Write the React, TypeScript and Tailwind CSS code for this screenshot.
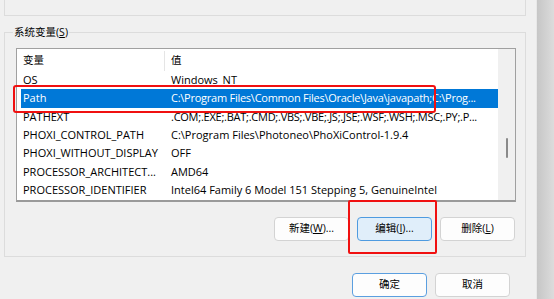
// 系统变量 dialog, cropped: env-var list with Path selected and edit button marked
const rows: [string, string, boolean][] = [
  ["OS", "Windows_NT", false],
  ["Path", "C:\\Program Files\\Common Files\\Oracle\\Java\\javapath;C:\\Prog...", true],
  ["PATHEXT", ".COM;.EXE;.BAT;.CMD;.VBS;.VBE;.JS;.JSE;.WSF;.WSH;.MSC;.PY;.P...", true],
  ["PHOXI_CONTROL_PATH", "C:\\Program Files\\Photoneo\\PhoXiControl-1.9.4", false],
  ["PHOXI_WITHOUT_DISPLAY", "OFF", false],
  ["PROCESSOR_ARCHITECT...", "AMD64", false],
  ["PROCESSOR_IDENTIFIER", "Intel64 Family 6 Model 151 Stepping 5, GenuineIntel", false],
];

function Btn({ label, keyChar, tail = "", variant = "normal" }: {
  label: string;
  keyChar: string;
  tail?: string;
  variant?: "normal" | "focus" | "default";
}) {
  const look =
    variant === "focus"
      ? "bg-[#e0eefa] border-[#4f9be0]"
      : variant === "default"
        ? "bg-[#fdfdfd] border-[#5b9fe0] border-[1.5px]"
        : "bg-[#fdfdfd] border-[#d3d3d3]";
  return (
    <div className={`w-[75px] h-[24px] flex items-center justify-center rounded-[4px] border text-[10.5px] text-black ${look}`}>
      {label}
      {keyChar && (
        <>
          (<span className="underline underline-offset-1">{keyChar}</span>){tail}
        </>
      )}
    </div>
  );
}

export default function App() {
  return (
    <div
      className="relative w-[554px] h-[299px] flex bg-[#f0f0f0] overflow-hidden"
      style={{ fontFamily: '"Open Sans", "Noto Sans CJK SC", sans-serif' }}
    >
      {/* dialog body */}
      <div className="w-[536px] flex flex-col">
        {/* bottom of the user-variables group */}
        <div className="ml-[4px] w-[522px] h-[16px] border-x border-b border-[#dcdcdc]" />

        {/* 系统变量 group */}
        <div className="relative ml-[4px] mt-[16px] w-[522px] h-[225px] border border-[#dcdcdc] flex flex-col">
          <span className="absolute -top-[8px] left-[8px] px-[1px] bg-[#f0f0f0] text-[10.5px] leading-[14px] text-black">
            系统变量(<span className="underline underline-offset-1">S</span>)
          </span>

          {/* list view */}
          <div className="ml-[11px] mt-[15px] w-[500px] h-[154px] bg-white border border-[#a0a0a0] border-b-2 border-b-[#9a9a9a] flex text-[11px] text-black">
            <div className="flex-1 flex flex-col overflow-hidden">
              <div className="h-[22px] pt-[2px] flex items-center text-[10.5px]">
                <div className="w-[148px] h-full pl-[6px] flex items-center border-r border-[#e5e5e5]">变量</div>
                <div className="pl-[6px]">值</div>
              </div>
              {rows.map(([name, value, tight], i) => (
                <div
                  key={name}
                  className={`ml-[4px] h-[18.33px] flex items-center whitespace-nowrap ${i === 1 ? "bg-[#0078d7] text-white" : ""}`}
                >
                  <div className="w-[144px] shrink-0 pl-[2px] overflow-hidden">{name}</div>
                  <div className={`pl-[6px] ${tight ? "tracking-[-0.25px]" : ""}`}>{value}</div>
                </div>
              ))}
            </div>
            {/* vertical scrollbar */}
            <div className="w-[17px] bg-[#f0f0f0] flex justify-center">
              <div className="mt-[89px] w-[2px] h-[20px] rounded-full bg-[#8a8a8a]" />
            </div>
          </div>

          <div className="mt-[15px] mr-[10px] flex justify-end gap-[8px]">
            <Btn label="新建" keyChar="W" tail="..." />
            <Btn label="编辑" keyChar="I" tail="..." variant="focus" />
            <Btn label="删除" keyChar="L" />
          </div>
        </div>

        <div className="mt-[16px] mr-[26px] flex justify-end gap-[8px]">
          <Btn label="确定" keyChar="" variant="default" />
          <Btn label="取消" keyChar="" />
        </div>
      </div>

      {/* window edge shadow */}
      <div className="w-[1px] bg-[#e8e8e8]" />
      <div className="flex-1 bg-gradient-to-r from-[#c6c6c6] to-[#dcdcdc]" />

      {/* red annotation boxes */}
      <div className="absolute left-[13px] top-[85px] w-[423px] h-[28px] border-2 border-[#f01010] rounded-[3px]" />
      <div className="absolute left-[348px] top-[200px] w-[89px] h-[54px] border-2 border-[#f01010] rounded-[2px]" />
    </div>
  );
}
